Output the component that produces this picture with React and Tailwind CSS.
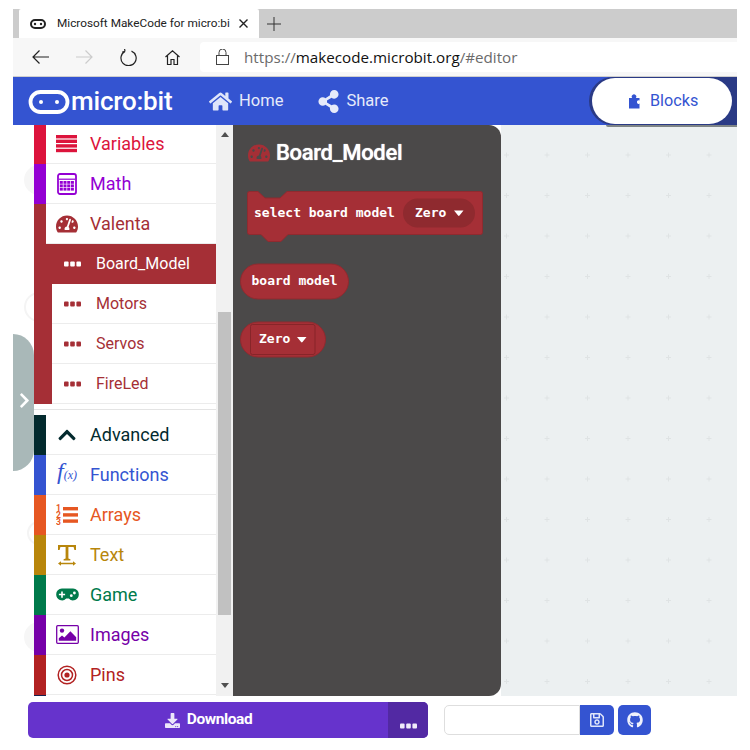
import React from "react";
import { FaHome, FaShareAlt, FaTachometerAlt, FaChevronUp, FaChevronRight, FaDownload, FaRegSave, FaGithub } from "react-icons/fa";

const Dots = ({ c }) => (
  <svg width="17" height="6" viewBox="0 0 17 6" className="shrink-0">
    <rect x="0" y="0.5" width="4.6" height="5" rx="1" fill={c} />
    <rect x="6.2" y="0.5" width="4.6" height="5" rx="1" fill={c} />
    <rect x="12.4" y="0.5" width="4.6" height="5" rx="1" fill={c} />
  </svg>
);

const VarsIcon = () => (
  <svg width="22" height="18" viewBox="0 0 22 18" fill="#dc143c">
    <rect y="0" width="21" height="3.4" /><rect y="4.6" width="21" height="3.4" /><rect y="9.2" width="21" height="3.4" /><rect y="13.8" width="21" height="3.4" />
  </svg>
);
const CalcIcon = () => (
  <svg width="20" height="22" viewBox="0 0 20 22" fill="#9400d3">
    <rect x="1" y="1" width="18" height="20" rx="2" fill="none" stroke="#9400d3" strokeWidth="1.8" />
    <rect x="2" y="5.600" width="16" height="1.200" />
    {[8, 11.4, 14.8].map((y) => [2.8, 6.500, 10.200, 13.900].map((x) => <rect key={x + "-" + y} x={x} y={y} width="3" height="2.800" />))}
  </svg>
);
const ArraysIcon = () => (
  <svg width="22" height="22" viewBox="0 0 22 22" fill="#e65722">
    <rect x="7" y="3" width="15" height="3.4" /><rect x="7" y="9.2" width="15" height="3.4" /><rect x="7" y="15.4" width="15" height="3.4" />
    <text fontSize="8.500" fontWeight="700" fontFamily="Roboto, sans-serif">
      <tspan x="0" y="7">1</tspan>
      <tspan x="0" y="14">2</tspan>
      <tspan x="0" y="21">3</tspan>
    </text>
  </svg>
);
const TextIcon = () => (
  <svg width="20" height="22" viewBox="0 0 20 22" fill="#b8860b">
    <path d="M1 1h18v5h-1.6l-.8-3H11.4v11.5l2 .7V16.500H6.600v-1.300l2-.7V3H3.400l-.8 3H1z" />
    <path d="M1 19.500l3-2.200v1.500h12v-1.500l3 2.200-3 2.200v-1.500H4v1.500z" />
  </svg>
);
const GameIcon = () => (
  <svg width="23" height="13" viewBox="0 0 23 13">
    <path d="M6 0.500h11a5.700 5.700 0 0 1 5.800 6 5.800 5.800 0 0 1-10 4h-2.600a5.800 5.800 0 0 1-10-4 5.700 5.700 0 0 1 5.800-6z" fill="#007a4b" />
    <path d="M5.200 3.400h1.600v2.400h2.300v1.500H6.800v2.400H5.200V7.300H2.900V5.800h2.300z" fill="#fff" />
    <circle cx="15.300" cy="7.700" r="1.400" fill="#fff" />
    <circle cx="18.400" cy="5" r="1.400" fill="#fff" />
  </svg>
);
const ImagesIcon = () => (
  <svg width="23" height="19" viewBox="0 0 23 19">
    <rect x="0.700" y="0.700" width="21.600" height="17.600" rx="1" fill="none" stroke="#7600a8" strokeWidth="1.300" />
    <circle cx="6" cy="5.600" r="2.200" fill="#7600a8" />
    <path d="M2.800 15.800v-2.500l3.200-2.800 2.400 2 6-6.200 5.800 6v3.500z" fill="#7600a8" />
  </svg>
);
const PinsIcon = () => (
  <svg width="20" height="20" viewBox="0 0 20 20" fill="none" stroke="#b22222">
    <circle cx="10" cy="10" r="8.800" strokeWidth="1.500" />
    <circle cx="10" cy="10" r="5.500" strokeWidth="1.500" />
    <circle cx="10" cy="10" r="2.600" fill="#b22222" stroke="none" />
  </svg>
);
const PuzzleIcon = () => (
  <svg width="11" height="15" viewBox="0 0 11 15" fill="#3454d1">
    <path d="M0 4h3.200a2.300 2.300 0 1 1 3.600 0H10.500v2.600a1.600 1.600 0 0 0-2.500 1.500 1.600 1.600 0 0 0 2.500 1.500V14.500H0z" />
  </svg>
);

const Row = ({ stripe, color, icon, label, h = "h-10" }) => (
  <div className={`${h} flex items-stretch`}>
    <div className="w-3 shrink-0" style={{ background: stripe }} />
    <div className="flex-1 flex items-center border-b border-[#ececec] bg-white">
      <div className="w-[44px] shrink-0 flex justify-center pl-[2px] pr-[4px]">{icon}</div>
      <span className="text-[18px] leading-none" style={{ color }}>{label}</span>
    </div>
  </div>
);

const SubRow = ({ label, active }) => (
  <div className="h-10 flex items-stretch">
    <div className="w-[18px] shrink-0 bg-[#a52f36]" />
    <div className={`flex-1 flex items-center ${active ? "bg-[#a52f36]" : "bg-white border-b border-[#ececec]"}`}>
      <div className="w-[44px] shrink-0 pl-[12px]"><Dots c={active ? "#fff" : "#a52f36"} /></div>
      <span className={`text-[16px] leading-none ${active ? "text-white" : "text-[#a52f36]"}`}>{label}</span>
    </div>
  </div>
);

const mono = { fontFamily: "'DejaVu Sans Mono', monospace", fontWeight: 700, fontSize: 13, fill: "#fff" };
const caret = (x, y) => <path d={`M${x} ${y}h9.500l-4 5a0.900 0.900 0 0 1-1.400 0z`} fill="#fff" />;

export default function App() {
  return (
    <div className="w-[750px] h-[750px] bg-white overflow-hidden pt-[9px] px-[13px] flex flex-col font-['Roboto',sans-serif]">
      {/* Browser tab strip */}
      <div className="h-[29px] shrink-0 bg-[#cccccc] flex items-stretch pl-[6px]">
        <div className="w-[240px] bg-white flex items-center rounded-t-[2px]">
          <svg width="16" height="10" viewBox="0 0 16 10" className="ml-[11px] shrink-0">
            <rect x="1" y="1" width="14" height="8" rx="4" fill="none" stroke="#222" strokeWidth="2" />
            <circle cx="5" cy="5" r="1.200" fill="#222" /><circle cx="11" cy="5" r="1.200" fill="#222" />
          </svg>
          <span className="ml-[11px] w-[174px] whitespace-nowrap text-[11.800px] text-[#222]">Microsoft MakeCode for micro:bi</span>
          <svg width="9" height="9" viewBox="0 0 9 9" className="ml-[8px]" stroke="#222" strokeWidth="1.400"><path d="M0.500 0.500l8 8M8.500 0.500l-8 8" /></svg>
        </div>
        <div className="flex items-center pl-[8px]">
          <svg width="14" height="14" viewBox="0 0 14 14" stroke="#333" strokeWidth="1"><path d="M7 0v14M0 7h14" /></svg>
        </div>
      </div>
      {/* Browser toolbar */}
      <div className="h-[39px] shrink-0 bg-[#f7f7f7] border-b border-[#cfcfcf] flex items-start pt-[4px]">
        <div className="w-[187px] h-[30px] shrink-0 flex items-center">
          <svg width="17" height="14" viewBox="0 0 17 14" className="ml-[19px]" fill="none" stroke="#222" strokeWidth="1.200"><path d="M17 7H1M7.500 0.500L1 7l6.500 6.500" /></svg>
          <svg width="17" height="14" viewBox="0 0 17 14" className="ml-[27px]" fill="none" stroke="#ccc" strokeWidth="1.200"><path d="M0 7h16M9.500 0.500L16 7l-6.500 6.500" /></svg>
          <svg width="17" height="17" viewBox="0 0 17 17" className="ml-[27px]" fill="none" stroke="#222" strokeWidth="1.200"><path d="M5 2.400a7.600 7.600 0 1 0 6.500-.3M5 2.400L4.600 0M5 2.400L2.200 3" /></svg>
          <svg width="15" height="15" viewBox="0 0 15 15" className="ml-[28px]" fill="none" stroke="#222" strokeWidth="1.200"><path d="M0.500 7L7.500 0.800 14.500 7M2.500 5.500V14.500h3.500V9.500h3V14.500h3.500V5.500" /></svg>
        </div>
        <div className="flex-1 h-[30px] bg-white rounded-l-[4px] flex items-center">
          <svg width="13" height="16" viewBox="0 0 13 16" className="ml-[16px]" fill="none" stroke="#444" strokeWidth="1"><rect x="0.500" y="6.500" width="12" height="9" /><path d="M3 6.500V3.500a3.500 3.500 0 0 1 7 0v3" /></svg>
          <span className="ml-[15px] text-[15.200px] text-[#6b6b6b] whitespace-nowrap font-['Open_Sans',sans-serif]">https://<span className="text-[#111]">makecode.microbit.org</span>/#editor</span>
        </div>
      </div>
      {/* MakeCode header */}
      <div className="h-[48px] shrink-0 bg-[#3454d1] flex items-center text-white">
        <svg width="54" height="28" viewBox="0 0 54 28" className="ml-[15px] shrink-0">
          <rect x="2.500" y="5" width="37" height="20" rx="10" fill="none" stroke="#fff" strokeWidth="3.800" />
          <circle cx="13" cy="15" r="2" fill="#fff" /><circle cx="29" cy="15" r="2" fill="#fff" />
        </svg>
        <span className="-ml-[11px] w-[128px] text-[26px] leading-none font-medium tracking-[-0.200px]">micro:bit</span>
        <FaHome size={23} color="#dfe5fa" className="ml-[10px]" />
        <span className="ml-[7px] text-[16.500px] text-[#e6eafa]">Home</span>
        <FaShareAlt size={23} color="#e6eafa" className="ml-[34px]" />
        <span className="ml-[6px] text-[16.500px] text-[#e6eafa]">Share</span>
        <div className="ml-auto h-full w-[148px] bg-[#2a3a85] rounded-l-[24px] pl-[3px] pr-[5px] py-[1px]">
          <div className="h-full bg-white rounded-[23px] flex items-center pl-[37px] text-[#3454d1]">
            <PuzzleIcon />
            <span className="ml-[10px] text-[16.200px]">Blocks</span>
          </div>
        </div>
      </div>
      {/* Editor */}
      <div className="h-[571px] shrink-0 flex items-stretch">
        <div className="w-[21px] shrink-0 relative">
          <div className="absolute inset-0 overflow-hidden">
            <div className="absolute left-[11px] top-[40px] w-[30px] h-[30px] rounded-full bg-[#f6f6f6]" />
            <div className="absolute left-[11px] top-[167px] w-[30px] h-[30px] rounded-full border-2 border-[#f4f4f4]" />
            <div className="absolute left-[14px] top-[396px] w-[24px] h-[24px] rounded-full border-2 border-[#f4f4f4]" />
            <div className="absolute left-[11px] top-[497px] w-[30px] h-[30px] rounded-full bg-[#f6f6f6]" />
          </div>
          <div className="absolute left-0 top-[209px] w-[21px] h-[137px] bg-[#a9b8b8] rounded-r-[21px] flex items-center justify-center">
            <FaChevronRight size={17} color="#fff" className="ml-[2px] -mt-[4px]" />
          </div>
        </div>
        <div className="w-[182px] shrink-0 bg-white flex flex-col overflow-hidden">
          <Row h="h-[39px]" stripe="#dc143c" color="#dc143c" icon={<VarsIcon />} label="Variables" />
          <Row stripe="#9400d3" color="#9400d3" icon={<CalcIcon />} label="Math" />
          <Row stripe="#a52f36" color="#a52f36" icon={<FaTachometerAlt size={22} color="#a52f36" />} label="Valenta" />
          <SubRow label="Board_Model" active />
          <SubRow label="Motors" />
          <SubRow label="Servos" />
          <SubRow label="FireLed" />
          <div className="h-[11px] shrink-0 pt-[5px]"><div className="h-px bg-[#e4e4e4]" /></div>
          <Row stripe="#032a2e" color="#032a2e" icon={<FaChevronUp size={20} color="#032a2e" />} label="Advanced" />
          <Row stripe="#3454d1" color="#3454d1" icon={<span className="text-[24px] italic leading-none text-[#3454d1] font-['Liberation_Serif',serif] -mt-[7px] whitespace-nowrap">f<span className="text-[12px]">(x)</span></span>} label="Functions" />
          <Row stripe="#e65722" color="#e65722" icon={<ArraysIcon />} label="Arrays" />
          <Row stripe="#b8860b" color="#b8860b" icon={<TextIcon />} label="Text" />
          <Row stripe="#007a4b" color="#007a4b" icon={<GameIcon />} label="Game" />
          <Row stripe="#7600a8" color="#7600a8" icon={<ImagesIcon />} label="Images" />
          <Row stripe="#b22222" color="#b22222" icon={<PinsIcon />} label="Pins" />
          <div className="h-px w-3 bg-[#15224f]" />
        </div>
        {/* scrollbar */}
        <div className="w-[17px] shrink-0 bg-[#f1f1f1] flex flex-col items-center">
          <svg width="8" height="5" viewBox="0 0 8 5" className="mt-[7px] shrink-0"><path d="M4 0l4 5H0z" fill="#505050" /></svg>
          <div className="mt-[175px] w-[13px] h-[303px] bg-[#c1c1c1] shrink-0" />
          <svg width="8" height="5" viewBox="0 0 8 5" className="mt-[68px] shrink-0"><path d="M4 5L0 0h8z" fill="#505050" /></svg>
        </div>
        {/* flyout */}
        <div className="w-[268px] shrink-0 bg-[#4b4949] rounded-r-[12px] flex flex-col items-start">
          <div className="flex items-center ml-[15px] mt-[16px] h-[24px]">
            <FaTachometerAlt size={22} color="#a52f36" />
            <span className="ml-[6px] text-[22px] font-medium leading-none tracking-[-0.300px] text-white [text-shadow:0_0_1px_#fff]">Board_Model</span>
          </div>
          <svg width="240" height="54" viewBox="0 0 240 54" className="ml-[13px] mt-[25px]">
            <path d="M3.500 1.500H12l7 6.500h15l7-6.500H234.500a2 2 0 0 1 2 2V42.500a2 2 0 0 1-2 2H42l-7 7H22l-7-7H3.500a2 2 0 0 1-2-2V3.500a2 2 0 0 1 2-2z" fill="#a52f36" stroke="#8f2a2f" />
            <text x="8" y="27" style={mono}>select board model</text>
            <rect x="157" y="8.500" width="72" height="29" rx="14.500" fill="#8f2a2f" />
            <text x="169" y="27" style={mono}>Zero</text>
            {caret(208, 20.500)}
          </svg>
          <svg width="112" height="38" viewBox="0 0 112 38" className="ml-[6px] mt-[19px]">
            <rect x="1.500" y="1" width="108" height="35" rx="17.500" fill="#a52f36" stroke="#8f2a2f" />
            <text x="12.500" y="22" style={mono}>board model</text>
          </svg>
          <svg width="90" height="38" viewBox="0 0 90 38" className="ml-[6px] mt-[20px]">
            <rect x="1.500" y="1" width="85" height="35" rx="17.500" fill="#a52f36" stroke="#8f2a2f" />
            <rect x="11.500" y="3.500" width="64.500" height="30" rx="2" fill="#a52f36" stroke="#872529" />
            <text x="20" y="22" style={mono}>Zero</text>
            {caret(58, 16)}
          </svg>
        </div>
        {/* workspace */}
        <div className="flex-1 relative bg-[#ecf0f1]">
          <svg width="100%" height="100%" className="block">
            <defs>
              <pattern id="plus" width="40.500" height="40.500" patternUnits="userSpaceOnUse" x="5" y="29.500">
                <path d="M0.500 -2V3M-2 0.500H3M41 -2V3M38.500 0.500H43.500M0.500 38.500V43.500M-2 41H3M41 38.500V43.500M38.500 41H43.500" stroke="#dfe3e4" strokeWidth="1" fill="none" />
              </pattern>
            </defs>
            <rect width="100%" height="100%" fill="url(#plus)" />
          </svg>
          <div className="absolute right-0 top-0 w-[131px] h-[2px] bg-[#7f8586] rounded-bl-[2px]" />
        </div>
      </div>
      {/* Footer */}
      <div className="flex-1 flex items-start pl-[15px] pt-[6px]">
        <div className="w-[400px] h-[36px] rounded-[5px] bg-[#6633cc] flex overflow-hidden text-white">
          <div className="flex-1 flex items-center justify-center gap-[7px] pl-[1px]">
            <FaDownload size={15} color="#ece6fa" />
            <span className="text-[15.500px] font-bold tracking-[-0.400px]">Download</span>
          </div>
          <div className="w-[40px] bg-[#5229a3] flex items-end justify-center pb-[9px]">
            <Dots c="#f0eafa" />
          </div>
        </div>
        <div className="ml-[16px] mt-[3px] w-[136px] h-[30px] bg-white border border-[#dedede] rounded-l-[5px]" />
        <div className="mt-[3px] w-[34px] h-[30px] bg-[#3454d1] rounded-r-[5px] flex items-center justify-center">
          <FaRegSave size={16} color="#dfe5fa" />
        </div>
        <div className="ml-[4px] mt-[3px] w-[33px] h-[30px] bg-[#3454d1] rounded-[5px] flex items-center justify-center">
          <FaGithub size={16} color="#eef1fc" />
        </div>
      </div>
    </div>
  );
}
